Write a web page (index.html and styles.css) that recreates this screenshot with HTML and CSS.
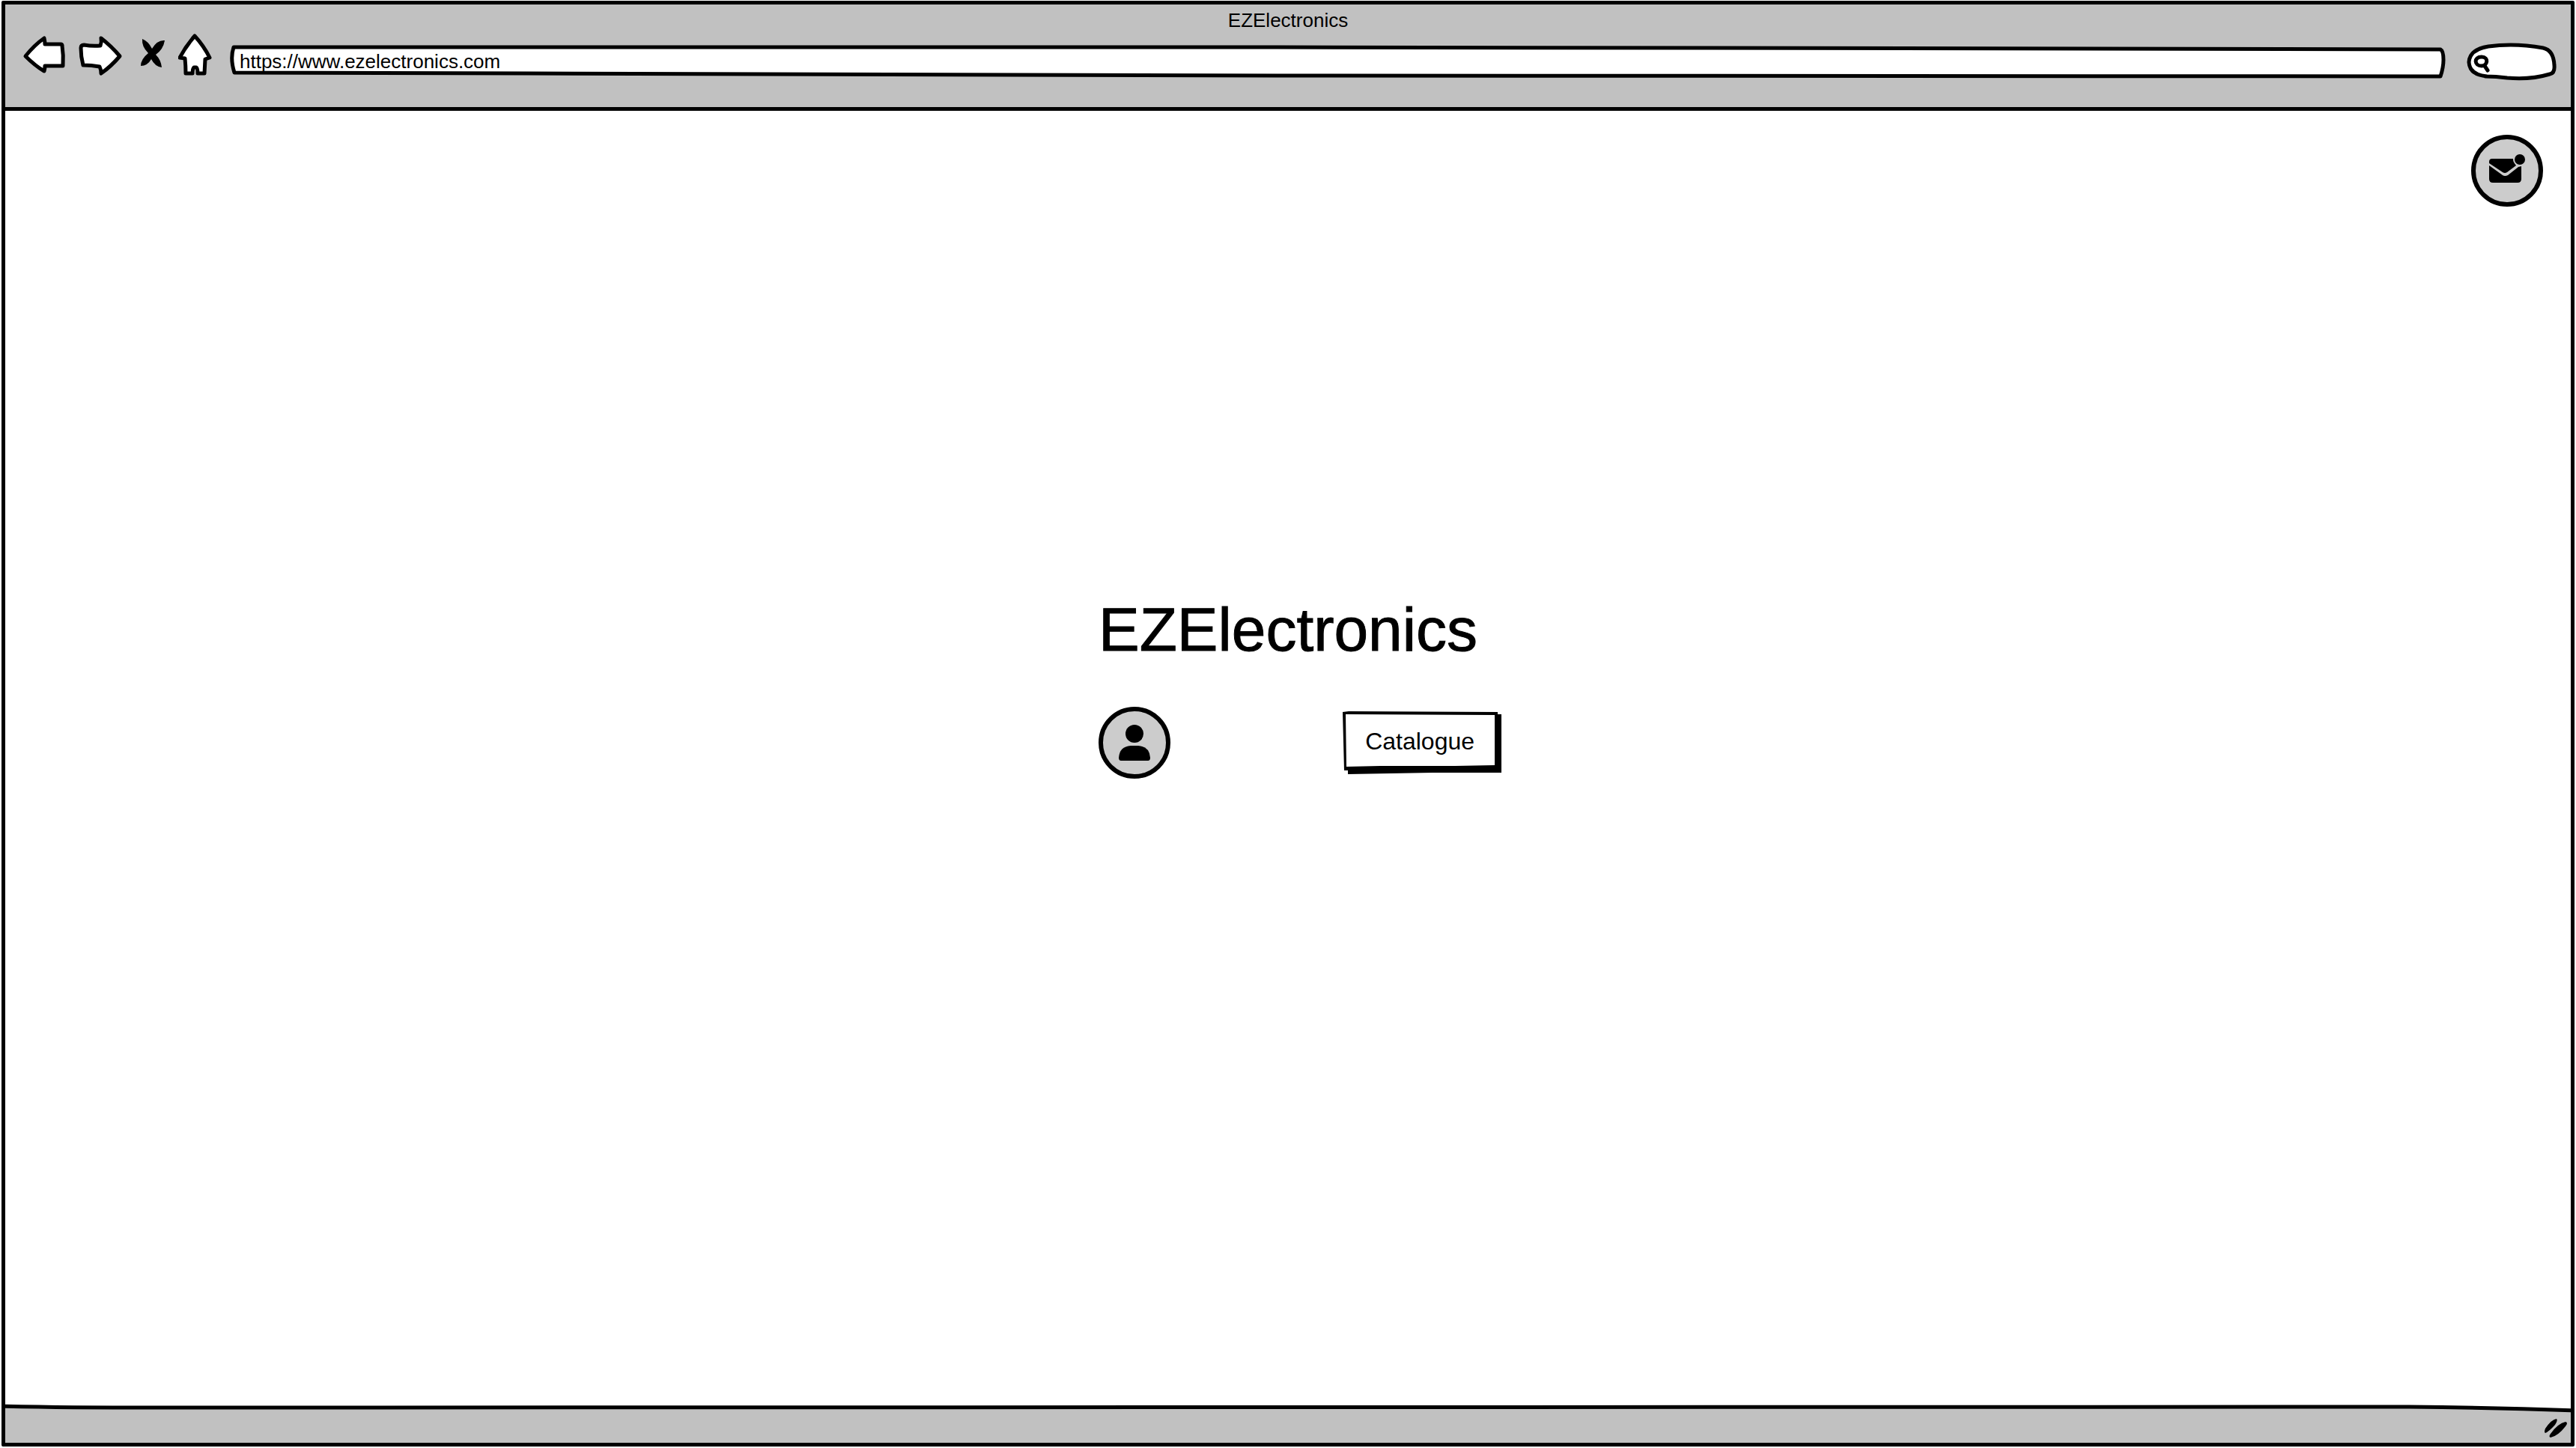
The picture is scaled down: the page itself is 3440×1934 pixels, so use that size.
FILE: index.html
```html
<!DOCTYPE html>
<html lang="en">
<head>
<meta charset="utf-8">
<meta name="viewport" content="width=device-width, initial-scale=1">
<title>EZElectronics</title>
<link rel="stylesheet" href="styles.css">
</head>
<body>
<div class="window">
  <header class="chrome">
    <p class="window-title">EZElectronics</p>
    <div class="toolbar">
      <nav class="nav-buttons" aria-label="Browser">
        <button class="nav-button" type="button" aria-label="Back">
          <svg class="sketch" width="60" height="60" viewBox="0 0 60 60"><path d="M4 31Q16 16 29 7Q30 11 30 15L51 15Q53 15 53 17Q55 30 54 44L30 44Q30 48 29 51Q17 44 4 31Z"/></svg>
        </button>
        <button class="nav-button" type="button" aria-label="Forward">
          <svg class="sketch" width="64" height="60" viewBox="0 0 64 60"><path d="M32 17Q34 12 33 7Q46 17 58 31Q46 45 33 54Q33 49 31 45Q20 43 9 43Q6 32 6 20Q6 16 10 16Q21 18 32 17Z"/></svg>
        </button>
        <button class="nav-button" type="button" aria-label="Stop">
          <svg width="48" height="60" viewBox="0 0 48 60"><path d="M12 8Q20 11 25 21Q32 9 42 10Q40 22 30 29Q37 36 38 46Q29 45 24 35Q19 44 10 44Q10 35 20 27Q11 18 12 8Z"/></svg>
        </button>
        <button class="nav-button" type="button" aria-label="Home">
          <svg class="sketch" width="48" height="60" viewBox="0 0 48 60"><path d="M22 4Q34 17 42 33L36 35L35 54L26 54Q26 47 24 46L21 46Q19 48 19 54L10 54Q10 44 9 34L2 33Q10 18 22 4Z"/></svg>
        </button>
      </nav>
      <div class="address">
        <svg class="outline sketch" viewBox="0 0 2962 60" preserveAspectRatio="none"><path d="M6 19L1400 19L2953 22Q2957 24 2957 36Q2957 46 2953 58L1400 57L400 54L7 53Q1 34 6 19Z"/></svg>
        <input class="address-input" type="text" aria-label="Address" value="https://www.ezelectronics.com">
      </div>
      <div class="search">
        <svg class="outline sketch" viewBox="0 0 128 60" preserveAspectRatio="none"><path d="M33 58Q10 56 9 39Q10 22 35 18Q70 13 108 20Q122 23 123 43Q124 54 117 55Q90 63 60 60Q45 58 31 58"/><path d="M26 32C36 32 34 44 26 44C16 44 15 32 26 32ZM30 44L34 50"/></svg>
        <input class="search-input" type="search" aria-label="Search">
      </div>
    </div>
  </header>

  <main class="page">
    <button class="round-button messages" type="button" aria-label="Messages">
      <svg width="84" height="84" viewBox="0 0 84 84"><path d="M22 26H52Q51 31 54 35L42 44Q39 46 36 44L18 32V30Q18 26 22 26Z"/><path d="M18 35L36 48Q39 50 43 48L57 37L61 36V53Q61 58 56 58H23Q18 58 18 53Z"/><circle class="badge" cx="59" cy="27" r="8"/></svg>
    </button>
    <section class="hero">
      <h1 class="hero-title">EZElectronics</h1>
      <div class="actions">
        <button class="round-button" type="button" aria-label="Account">
          <svg width="84" height="84" viewBox="0 0 84 84"><circle cx="42" cy="30" r="12"/><path d="M37 46H47Q62 47 63 62Q63 66 60 66H24Q21 66 21 62Q22 47 37 46Z"/></svg>
        </button>
        <button class="catalogue" type="button">
          <svg class="outline" viewBox="0 0 212 84" preserveAspectRatio="none"><path d="M0 1L8 0L207 1V4H212V82L120 82L7 84V79H2Z"/><path class="paper" d="M4 4L203 5V72L150 73L100 73L50 73L5 74Z"/></svg>
          <span class="catalogue-label">Catalogue</span>
        </button>
      </div>
    </section>
  </main>

  <footer class="status">
    <svg class="outline sketch status-edge" viewBox="0 0 3426 52" preserveAspectRatio="none"><path d="M-6 3Q80 5 200 5L3210 4Q3330 5 3432 9V60H-6Z"/></svg>
    <svg class="grip" width="34" height="30" viewBox="0 0 34 30"><path d="M18 2Q20 4 16 10Q8 19 3 21Q1 20 3 15Q11 3 18 2ZM30 6Q34 7 30 12Q20 25 10 27Q7 26 10 22Q20 8 30 6Z"/></svg>
  </footer>
</div>
</body>
</html>
```
FILE: styles.css
```css
* {
  box-sizing: border-box;
}

body {
  margin: 0;
  background: #fff;
  color: #000;
  font-family: "Liberation Sans", Arial, sans-serif;
  font-size: 26px;
}

button,
input {
  margin: 0;
  padding: 0;
  border: 0;
  background: none;
  color: inherit;
  font: inherit;
}

svg {
  display: block;
}

.window {
  display: flex;
  flex-direction: column;
  min-height: calc(100vh - 3px);
  margin: 1px 2px 2px;
  border: 5px solid #000;
  border-radius: 2px;
}

.sketch {
  fill: #fff;
  stroke: #000;
  stroke-width: 5px;
  stroke-linecap: round;
  stroke-linejoin: round;
}

.sketch path {
  vector-effect: non-scaling-stroke;
}

.outline {
  position: absolute;
  inset: 0;
  width: 100%;
  height: 100%;
  overflow: visible;
}

/* Browser chrome */
.chrome {
  padding-top: 6px;
  border-bottom: 5px solid #000;
  background: #c1c1c1;
}

.window-title {
  margin: 0;
  line-height: 30px;
  text-align: center;
}

.toolbar {
  display: flex;
  gap: 20px;
  padding: 2px 17px 39px 23px;
}

.nav-buttons {
  display: flex;
  gap: 12px;
}

.address {
  position: relative;
  flex: 1;
}

.address-input,
.search-input {
  position: relative;
  display: block;
  width: 100%;
  height: 60px;
  padding: 16px 14px 0;
}

.search {
  position: relative;
  width: 128px;
}

.search-input {
  padding-left: 40px;
}

/* Page */
.page {
  display: flex;
  flex: 1;
  flex-direction: column;
  align-items: center;
  padding-top: 32px;
}

.round-button {
  flex: none;
  width: 96px;
  height: 96px;
  border: 6px solid #000;
  border-radius: 50%;
  background: #ccc;
}

.messages {
  align-self: flex-end;
  margin-right: 37px;
}

.badge {
  stroke: #ccc;
  stroke-width: 2px;
}

.hero {
  display: flex;
  flex: 1;
  flex-direction: column;
}

/* Hero sits a little above the middle of the free space */
.hero::before {
  flex: 13;
  content: "";
}

.hero::after {
  flex: 21;
  content: "";
}

.hero-title {
  margin: 0;
  font-size: 82px;
  font-weight: 400;
  line-height: 96px;
  -webkit-text-stroke: 1px #000;
}

.actions {
  display: flex;
  align-items: center;
  gap: 230px;
  width: 0;
  margin-top: 55px;
}

.catalogue {
  position: relative;
  flex: none;
  width: 212px;
  height: 84px;
  padding: 0 6px 3px 0;
  font-size: 32px;
}

.catalogue-label {
  position: relative;
}

.paper {
  fill: #fff;
}

/* Status bar */
.status {
  position: relative;
  display: flex;
  align-items: center;
  justify-content: flex-end;
  height: 52px;
  padding: 14px 3px 0 0;
  overflow: hidden;
}

.status-edge {
  fill: #c1c1c1;
}

.grip {
  position: relative;
}
```
